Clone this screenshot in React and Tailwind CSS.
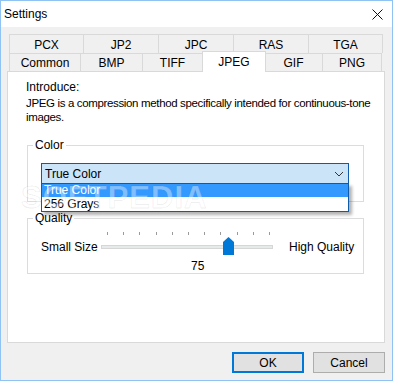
import { useState } from 'react';

const topTabs = [
  { label: 'PCX', w: 'w-[75px]' },
  { label: 'JP2', w: 'w-[75px]' },
  { label: 'JPC', w: 'w-[75px]' },
  { label: 'RAS', w: 'w-[75px]' },
  { label: 'TGA', w: 'w-[74px]' },
];

const bottomTabs = [
  { label: 'Common', w: 'w-[72px]' },
  { label: 'BMP', w: 'w-[62px]' },
  { label: 'TIFF', w: 'w-[60px]' },
  { label: 'JPEG', w: 'w-[64px]', active: true },
  { label: 'GIF', w: 'w-[58px]' },
  { label: 'PNG', w: 'w-[59px]' },
];

function Slider({ value }) {
  // 0..100 in steps of 10, ticks every ~16px
  const ticks = Array.from({ length: 11 }, (_, i) => 6 + i * 16.2);
  const x = 6 + (value / 100) * 162;
  return (
    <svg width="172" height="26" className="shrink-0">
      {ticks.map((t) => (
        <line key={t} x1={Math.round(t) + 0.5} y1="2" x2={Math.round(t) + 0.5} y2="5" stroke="#9a9a9a" strokeWidth="1" />
      ))}
      <rect x="0.5" y="15.5" width="171" height="3" fill="#e7eaea" stroke="#d6d6d6" />
      <path
        d={`M${x} 7 L${x + 5.5} 12 L${x + 5.5} 25 L${x - 5.5} 25 L${x - 5.5} 12 Z`}
        fill="#0078d7"
      />
    </svg>
  );
}

export default function App() {
  const [tab, setTab] = useState('JPEG');

  return (
    <div className="relative w-[393px] h-[381px] border border-[#8fc3f3] bg-[#f0f0f0] flex flex-col text-[12px] leading-[14px] text-black font-['Liberation_Sans',Arial,sans-serif] overflow-hidden">
      {/* Title bar */}
      <div className="h-[26px] bg-white flex items-center justify-between pl-[3px] pr-[9px] shrink-0">
        <span className="text-[12px]">Settings</span>
        <svg width="11" height="11" viewBox="0 0 11 11">
          <path d="M0.5 0.5 L10.5 10.5 M10.5 0.5 L0.5 10.5" stroke="#111" strokeWidth="1" />
        </svg>
      </div>

      <div className="flex-1 flex flex-col pt-[7px] pl-[6px]">
        {/* Tabs */}
        <div className="ml-[2px] flex flex-col">
          <div className="flex h-[19px]">
            {topTabs.map((t, i) => (
              <button
                key={t.label}
                onClick={() => setTab(t.label)}
                className={`${t.w} h-full border-t border-r border-[#d9d9d9] ${i === 0 ? 'border-l' : ''} flex items-center justify-center pt-[1px]`}
              >
                {t.label}
              </button>
            ))}
          </div>
          <div className="flex h-[18px] items-end">
            {bottomTabs.map((t, i) =>
              t.active ? (
                <button
                  key={t.label}
                  onClick={() => setTab(t.label)}
                  className={`${t.w} -ml-px -mr-px h-[21px] -mb-px relative z-10 bg-white border-t border-l border-r border-[#d9d9d9] flex items-start justify-center pt-[3px]`}
                >
                  {t.label}
                </button>
              ) : (
                <button
                  key={t.label}
                  onClick={() => setTab(t.label)}
                  className={`${t.w} h-full border-t border-r border-[#d9d9d9] ${i === 0 ? 'border-l' : ''} flex items-center justify-center`}
                >
                  {t.label}
                </button>
              )
            )}
          </div>
        </div>

        {/* Panel */}
        <div className="w-[378px] h-[272px] bg-white border border-[#d9d9d9] pl-[18px] pt-[8px]">
          <div>Introduce:</div>
          <p className="mt-[2px] text-[11.5px] leading-[14px] tracking-[-0.35px]">
            <span className="whitespace-nowrap">JPEG is a compression method specifically intended for continuous-tone</span>
            <br />
            images.
          </p>

          <fieldset className="ml-[1px] mt-[14px] w-[337px] border border-[#dcdcdc] p-0 pb-[17px]">
            <legend className="ml-[5px] px-[2px] leading-[14px]">Color</legend>
            <div className="relative ml-[13px] mt-[11px] w-[308px] h-[21px] border border-[#0f5ba7] bg-[#cce4f7] flex items-center justify-between pl-[3px] pr-[4px]">
              <span>True Color</span>
              <svg width="10" height="6" viewBox="0 0 10 6">
                <path d="M1 1 L5 5 L9 1" fill="none" stroke="#333" strokeWidth="1" />
              </svg>
              {/* Open list */}
              <div className="absolute left-[-1px] top-[19px] w-[308px] h-[29px] border border-[#0f5ba7] bg-white shadow-[3px_3px_3px_rgba(0,0,0,0.3)] z-20 flex flex-col">
                <div className="h-[13px] bg-[#3399ff] text-white pl-[2px] leading-[13px]">True Color</div>
                <div className="h-[14px] pl-[2px] leading-[14px]">256 Grays</div>
              </div>
            </div>
          </fieldset>

          <fieldset className="ml-[1px] mt-[9px] w-[337px] border border-[#dcdcdc] p-0">
            <legend className="ml-[5px] px-[2px] leading-[14px]">Quality</legend>
            <div className="flex items-start mt-[5px] ml-[13px]">
              <span className="w-[60px] mt-[10px] shrink-0">Small Size</span>
              <Slider value={75} />
              <span className="ml-[16px] mt-[10px]">High Quality</span>
            </div>
            <div className="ml-[163px] mt-[3px]">75</div>
          </fieldset>
        </div>

        {/* Buttons */}
        <div className="flex justify-end gap-[9px] mt-[9px] pr-[7px]">
          <button className="w-[72px] h-[21px] border-2 border-[#0078d7] bg-[#e1e1e1] flex items-center justify-center">
            OK
          </button>
          <button className="w-[72px] h-[21px] border border-[#adadad] bg-[#e1e1e1] flex items-center justify-center">
            Cancel
          </button>
        </div>
      </div>

      {/* Watermark */}
      <div className="absolute left-[20px] top-[180px] text-[31px] leading-[34px] font-bold tracking-[1px] text-white/40 [-webkit-text-stroke:1px_rgba(0,0,0,0.07)] pointer-events-none select-none z-30">
        SOFTPEDIA
      </div>
    </div>
  );
}
